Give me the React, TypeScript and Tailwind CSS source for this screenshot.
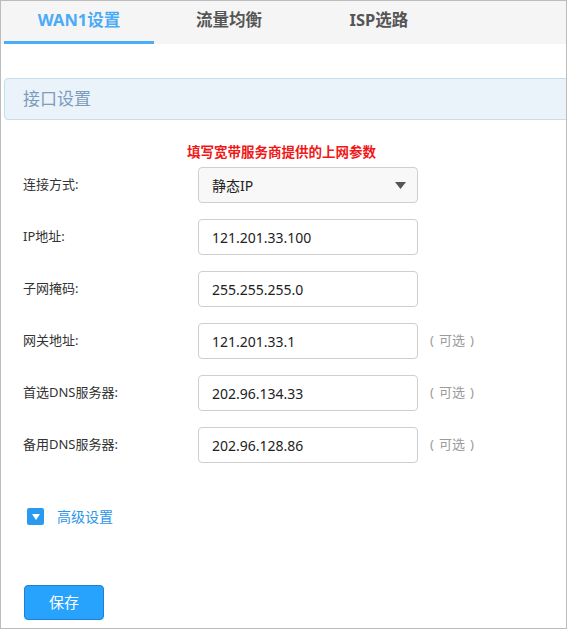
import React, { useState } from 'react';

const rows = [
  { label: '连接方式:', value: '静态IP', select: true, optional: false },
  { label: 'IP地址:', value: '121.201.33.100', select: false, optional: false },
  { label: '子网掩码:', value: '255.255.255.0', select: false, optional: false },
  { label: '网关地址:', value: '121.201.33.1', select: false, optional: true },
  { label: '首选DNS服务器:', value: '202.96.134.33', select: false, optional: true },
  { label: '备用DNS服务器:', value: '202.96.128.86', select: false, optional: true },
];

const tabs = ['WAN1设置', '流量均衡', 'ISP选路'];

export default function App() {
  const [active, setActive] = useState(0);

  return (
    <div className="w-[567px] h-[629px] border border-[#bcbcbc] bg-white font-['Noto_Sans','Noto_Sans_CJK_SC',sans-serif] text-[#333] overflow-hidden">
      {/* tab bar */}
      <div className="h-[43px] bg-[#f5f5f5] flex pl-[3px]">
        {tabs.map((t, i) => (
          <button
            key={t}
            onClick={() => setActive(i)}
            className={`w-[150px] h-full flex items-center justify-center text-[16.5px] font-bold border-b-[3px] pb-[2px] ${
              i === active ? 'text-[#4aabf7] border-[#4aabf7]' : 'text-[#555] border-transparent'
            }`}
          >
            {t}
          </button>
        ))}
      </div>

      {/* section header */}
      <div className="mt-[34px] ml-[3px] -mr-[2px] h-[42px] bg-[#eaf2fa] border border-[#c7dcec] rounded-l-[4px] flex items-center pl-[18px]">
        <span className="text-[17px] text-[#7c9cbc]">接口设置</span>
      </div>

      <div className="mt-[23px] pl-[186px] text-[13.5px] leading-[18px] font-bold text-[#f01818]">
        填写宽带服务商提供的上网参数
      </div>

      <div className="mt-[6px] flex flex-col gap-[16px]">
        {rows.map((r) => (
          <div key={r.label} className="flex items-center h-[36px]">
            <div className="w-[197px] pl-[22px] text-[13px]">{r.label}</div>
            {r.select ? (
              <div className="w-[220px] h-[36px] rounded-[4px] border border-[#cfcfcf] bg-[#f8f8f8] flex items-center justify-between pl-[13px] pr-[11px] text-[14px] text-[#222]">
                <span>{r.value}</span>
                <svg width="11" height="7" viewBox="0 0 11 7">
                  <path d="M0 0 L11 0 L5.5 7 Z" fill="#555" />
                </svg>
              </div>
            ) : (
              <div className="w-[220px] h-[36px] rounded-[4px] border border-[#cfcfcf] bg-white flex items-center pl-[13px] text-[14px] text-[#222]">
                {r.value}
              </div>
            )}
            {r.optional && (
              <span className="ml-[12px] flex items-center gap-[5px] text-[13px] text-[#9a9a9a]">
                <span>(</span>
                <span>可选</span>
                <span>)</span>
              </span>
            )}
          </div>
        ))}
      </div>

      {/* advanced */}
      <div className="mt-[43px] ml-[26px] flex items-center">
        <div className="w-[17px] h-[17px] rounded-[2px] bg-[#2a9af1] flex items-center justify-center">
          <svg width="8" height="6" viewBox="0 0 8 6">
            <path d="M0 0 L8 0 L4 6 Z" fill="#fff" />
          </svg>
        </div>
        <span className="ml-[13px] text-[14px] text-[#2b95e9]">高级设置</span>
      </div>

      <button className="mt-[58px] ml-[23px] w-[80px] h-[35px] rounded-[4px] bg-[#27a3fd] border border-[#1a80d8] text-white text-[15px]">
        保存
      </button>
    </div>
  );
}
